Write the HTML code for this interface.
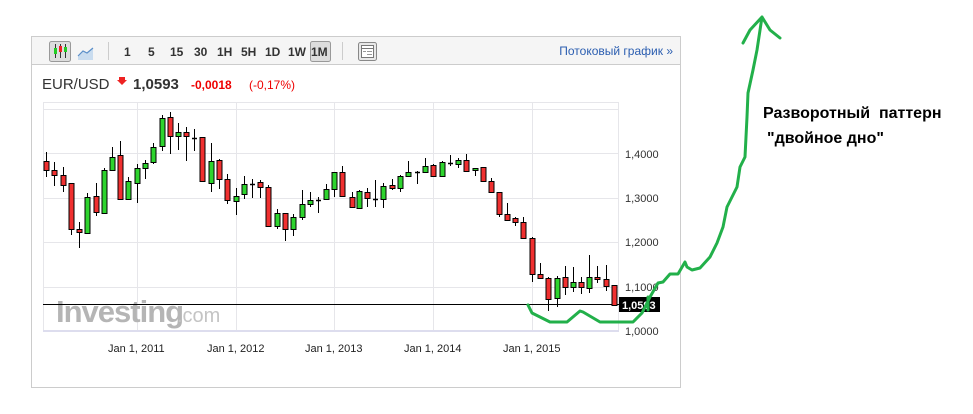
<!DOCTYPE html>
<html><head><meta charset="utf-8"><style>
body{margin:0;background:#fff;width:973px;height:414px;overflow:hidden;font-family:"Liberation Sans",Arial,sans-serif;}
svg{position:absolute;left:0;top:0}
</style></head><body>
<svg width="973" height="414" xmlns="http://www.w3.org/2000/svg" font-family="Liberation Sans, Arial, sans-serif">
<rect x="31.5" y="36.5" width="649" height="351" fill="#fff" stroke="#ccc"/>
<rect x="32" y="37" width="648" height="27" fill="#f5f5f5"/>
<line x1="32" y1="64.5" x2="680" y2="64.5" stroke="#ccc"/>
<rect x="49.5" y="41.5" width="21" height="20" rx="2" fill="#ddd" stroke="#999"/>
<g stroke="#333" stroke-width="1"><line x1="55.5" y1="44" x2="55.5" y2="58"/><line x1="60.5" y1="44" x2="60.5" y2="58"/><line x1="65.5" y1="44" x2="65.5" y2="58"/></g>
<rect x="54" y="48" width="3" height="6" fill="#2c2"/><rect x="59" y="46" width="3" height="6" fill="#e22"/><rect x="64" y="47" width="3" height="5" fill="#2c2"/>
<path d="M78 56 L83 51 L87 53 L93 48 L93 60 L78 60Z" fill="#c9dcef"/>
<path d="M78 56 L83 51 L87 53 L93 48" fill="none" stroke="#5b8fc9" stroke-width="1.2"/>
<line x1="108.5" y1="42" x2="108.5" y2="60" stroke="#ccc"/>
<g font-size="12" font-weight="bold" fill="#333">
<text x="124" y="56">1</text><text x="148" y="56">5</text><text x="170" y="56">15</text><text x="194" y="56">30</text><text x="217" y="56">1H</text><text x="241" y="56">5H</text><text x="265" y="56">1D</text><text x="288" y="56">1W</text>
</g>
<rect x="310.5" y="41.5" width="20" height="20" rx="2" fill="#ddd" stroke="#999"/>
<text x="311" y="56" font-size="12" font-weight="bold" fill="#333">1M</text>
<line x1="342.5" y1="42" x2="342.5" y2="60" stroke="#ccc"/>
<rect x="358.5" y="42.5" width="18" height="18" rx="2" fill="#e8e8e8" stroke="#888"/>
<rect x="361.5" y="45.5" width="12" height="12" fill="#fff" stroke="#777"/>
<line x1="362" y1="48.5" x2="373" y2="48.5" stroke="#777"/>
<g stroke="#999"><line x1="363" y1="51.5" x2="366" y2="51.5"/><line x1="367" y1="51.5" x2="372" y2="51.5"/><line x1="367" y1="54.5" x2="372" y2="54.5"/></g>
<text x="673" y="55" font-size="12" fill="#2a5db0" text-anchor="end">Потоковый график »</text>
<text x="42" y="89" font-size="15" fill="#333">EUR/USD</text>
<path d="M119 77 L125 77 L125 80 L127 80 L122 85 L117 80 L119 80Z" fill="#e22"/>
<text x="133" y="89" font-size="15" font-weight="bold" fill="#333">1,0593</text>
<text x="191" y="89" font-size="12" font-weight="bold" fill="#e00">-0,0018</text>
<text x="249" y="89" font-size="12" fill="#e00">(-0,17%)</text>
<g stroke="#e6e6ea" stroke-width="1">
<rect x="43.5" y="102.5" width="575" height="228" fill="#fff"/>
<line x1="43" y1="109.5" x2="618" y2="109.5"/>
<line x1="43" y1="153.5" x2="618" y2="153.5"/>
<line x1="43" y1="198.5" x2="618" y2="198.5"/>
<line x1="43" y1="242.5" x2="618" y2="242.5"/>
<line x1="43" y1="287.5" x2="618" y2="287.5"/>
<line x1="137.5" y1="102" x2="137.5" y2="331"/>
<line x1="236.5" y1="102" x2="236.5" y2="331"/>
<line x1="334.5" y1="102" x2="334.5" y2="331"/>
<line x1="433.5" y1="102" x2="433.5" y2="331"/>
<line x1="532.5" y1="102" x2="532.5" y2="331"/>
</g>
<line x1="43" y1="331" x2="619" y2="331" stroke="#dde" stroke-width="2"/>
<text x="56" y="322" font-size="31" font-weight="bold" fill="#b5b5b5" letter-spacing="-1">Investing</text>
<text x="177" y="322" font-size="20" fill="#c4c4c4">.com</text>
<line x1="43" y1="304.5" x2="660" y2="304.5" stroke="#000"/>
<g id="c"></g>
<g font-size="11" fill="#333">
<text x="625" y="158">1,4000</text><text x="625" y="202">1,3000</text><text x="625" y="246">1,2000</text><text x="625" y="291">1,1000</text><text x="625" y="335">1,0000</text>
</g>
<g font-size="11" fill="#222">
<text x="108" y="352">Jan 1, 2011</text><text x="207" y="352">Jan 1, 2012</text><text x="305" y="352">Jan 1, 2013</text><text x="404" y="352">Jan 1, 2014</text><text x="503" y="352">Jan 1, 2015</text>
</g>
<rect x="619" y="297" width="41" height="15" fill="#000"/>
<text x="622" y="309" font-size="11" font-weight="bold" fill="#fff">1,0593</text>
<path d="M528 305 L532 313 L550 322 L567 322 L580 311 L583 312 L600 322 L633 322 L642 313 L650 297 L658 283 L663 282 L670 274 L678 274 L685 262 L687 267 L692 270 L700 268 L710 257 L717 243 L723 227 L727 207 L737 187 L740 167 L745 157 L747 117 L748 93 L753 70 L757 50 L762 17 M743 43 L750 30 L762 17 L770 30 L780 38 M648 297 L648 310" fill="none" stroke="#22b04a" stroke-width="3" stroke-linejoin="round" stroke-linecap="round"/>
<text x="763" y="118" font-size="16" font-weight="bold" fill="#000" xml:space="preserve">Разворотный  паттерн</text>
<text x="767" y="143" font-size="16" font-weight="bold" fill="#000">"двойное дно"</text>
</svg>
<script>
var d=[
[46,161,170,152,177,0],[54,170,175,162,186,0],[63,175,185,167,192,0],[71,183,229,183,235,0],[79,229,232,222,248,0],
[87,197,233,193,233,1],[96,196,212,183,216,0],[104,170,213,168,213,1],[112,157,170,147,170,1],[120,155,199,141,199,0],
[128,181,199,177,199,1],[137,168,183,164,203,1],[145,163,168,160,179,1],[153,147,162,143,164,1],[162,118,146,115,151,1],
[170,117,136,112,154,0],[178,132,136,123,150,1],[186,132,136,127,161,0],[194,138,138,129,151,2],[202,137,181,137,181,0],
[211,161,183,143,192,1],[219,160,179,159,189,0],[227,179,200,174,204,0],[236,196,201,188,215,1],[244,184,194,176,199,1],
[252,184,184,179,198,2],[260,182,187,180,198,0],[268,187,226,185,226,0],[277,213,226,209,229,1],[285,213,229,213,241,0],
[293,217,229,214,236,1],[302,204,217,190,220,1],[310,200,204,192,207,1],[318,200,200,197,213,2],[326,189,199,184,199,1],
[334,172,189,172,197,1],[342,172,196,166,197,0],[352,197,207,192,208,0],[359,191,208,190,209,1],[367,192,198,188,207,0],
[375,199,199,180,207,2],[383,186,199,183,208,1],[392,185,188,179,190,0],[400,176,188,175,192,1],[408,172,176,161,177,1],
[417,172,172,171,184,2],[425,166,172,158,173,1],[433,165,176,164,176,0],[442,162,176,161,176,1],[450,163,163,155,166,2],
[458,160,164,158,168,1],[466,160,171,154,171,0],[475,168,170,168,176,1],[483,167,181,167,181,0],[491,181,192,178,192,0],
[499,192,214,192,217,0],[507,214,220,203,221,0],[515,218,222,217,226,0],[523,222,238,217,238,0],[532,238,274,237,282,0],
[540,274,278,263,278,0],[548,278,299,277,311,0],[557,278,298,276,307,1],[565,277,287,266,295,0],[573,282,287,267,292,1],
[581,282,287,277,294,0],[589,277,288,255,293,1],[597,277,279,266,283,0],[606,279,286,265,291,0],[614,285,305,285,305,0]];
var s='';
d.forEach(function(c){var x=c[0];
s+='<line x1="'+(x+.5)+'" y1="'+c[3]+'" x2="'+(x+.5)+'" y2="'+c[4]+'" stroke="#000"/>';
if(c[5]==2){s+='<line x1="'+(x-2)+'" y1="'+(c[1]+.5)+'" x2="'+(x+3)+'" y2="'+(c[1]+.5)+'" stroke="#000" stroke-width="1.5"/>';}
else{var h=Math.max(c[2]-c[1],2);s+='<rect x="'+(x-2)+'" y="'+(c[1]+.5)+'" width="5" height="'+h+'" fill="'+(c[5]?'#2ed42e':'#f03030')+'" stroke="#000" stroke-width="1"/>';}
});
document.getElementById('c').innerHTML=s;
</script>
</body></html>
